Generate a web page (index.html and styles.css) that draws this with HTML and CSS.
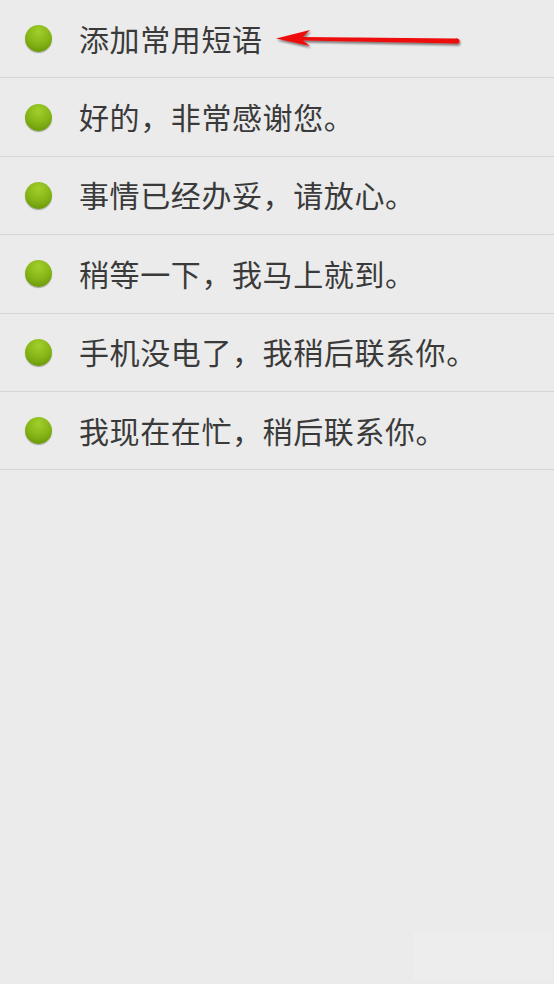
FILE: index.html
```html
<!DOCTYPE html>
<html lang="zh-CN">
<head>
<meta charset="utf-8">
<title>常用短语</title>
<link rel="stylesheet" href="styles.css">
</head>
<body>
<ul class="list">
  <li class="row"><span class="dot"></span><span class="label">添加常用短语</span></li>
  <li class="row"><span class="dot"></span><span class="label">好的，非常感谢您。</span></li>
  <li class="row"><span class="dot"></span><span class="label">事情已经办妥，请放心。</span></li>
  <li class="row"><span class="dot"></span><span class="label">稍等一下，我马上就到。</span></li>
  <li class="row"><span class="dot"></span><span class="label">手机没电了，我稍后联系你。</span></li>
  <li class="row"><span class="dot"></span><span class="label">我现在在忙，稍后联系你。</span></li>
</ul>
<svg class="arrow" width="200" height="30" viewBox="0 0 200 30" aria-hidden="true">
  <defs>
    <filter id="sh" x="-10%" y="-50%" width="120%" height="200%">
      <feGaussianBlur in="SourceAlpha" stdDeviation="1.3"/>
      <feOffset dx="1" dy="2" result="b"/>
      <feComponentTransfer><feFuncA type="linear" slope="0.5"/></feComponentTransfer>
      <feMerge><feMergeNode/><feMergeNode in="SourceGraphic"/></feMerge>
    </filter>
  </defs>
  <g filter="url(#sh)">
    <path d="M1 14.5 L35 6 L28 13 L182 14.5 L182 19.5 L28 16.5 L35 22 Z" fill="#ee0e0e"/>
    <circle cx="182" cy="17" r="2.5" fill="#ee0e0e"/>
  </g>
</svg>
<div class="ghost"></div>
</body>
</html>
```
FILE: styles.css
```css
html, body {
  margin: 0;
  padding: 0;
  background: #ebebeb;
  height: 100%;
}
body {
  font-family: "Noto Sans CJK SC", "Noto Sans", sans-serif;
  color: #3a3a3a;
  position: relative;
  overflow: hidden;
}
.list {
  list-style: none;
  margin: 0;
  padding: 0;
}
.row {
  height: 77.4px;
  border-bottom: 1px solid #d5d5d5;
  display: flex;
  align-items: center;
  padding-left: 25px;
}
.dot {
  width: 27px;
  height: 27px;
  border-radius: 50%;
  flex: none;
  background: radial-gradient(circle at 50% 25%, #a2cf2c 0%, #86b517 50%, #5f8d06 100%);
  box-shadow: 0 1px 1px rgba(0,0,0,0.3);
}
.label {
  margin-left: 27px;
  font-size: 30px;
  line-height: 1;
  letter-spacing: 0.6px;
  position: relative;
  top: -1px;
}
.arrow {
  position: absolute;
  left: 275px;
  top: 24px;
}
.ghost {
  position: absolute;
  left: 413px;
  top: 932px;
  width: 139px;
  height: 48px;
  background: #ededed;
}
```
